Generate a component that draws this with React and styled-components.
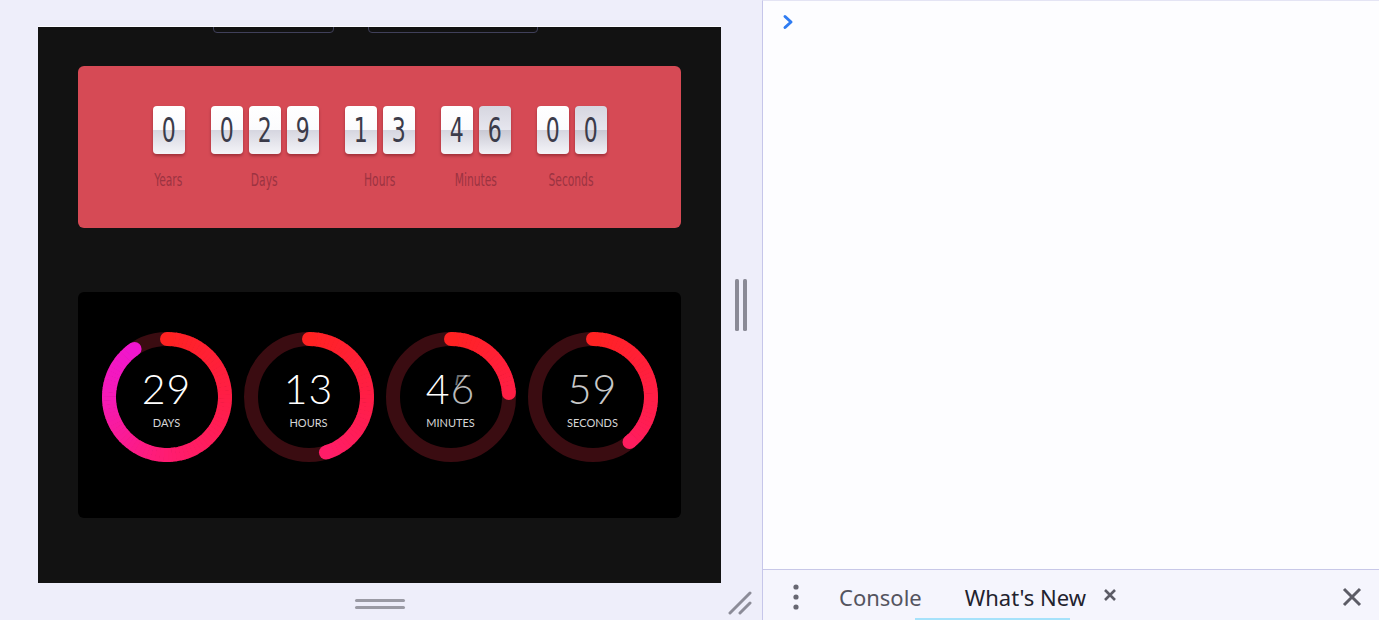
import React from 'react';
import styled, { createGlobalStyle } from 'styled-components';

const GlobalStyle = createGlobalStyle`
  html, body {
    margin: 0;
    padding: 0;
    overflow: hidden;
  }
  body {
    font-family: 'Noto Sans', 'Open Sans', sans-serif;
  }
`;

const Page = styled.div`
  display: flex;
  width: 1379px;
  height: 620px;
`;

// left side: the device preview
const LeftPane = styled.div`
  width: 762px;
  flex: none;
  background: #eeeefa;
  display: grid;
  grid-template-columns: 38px 683px 41px;
  grid-template-rows: 26px 557px 37px;
`;

const Frame = styled.div`
  grid-column: 2;
  grid-row: 2;
  background: #121212;
  border-top: 1px solid #fbfbff;
  overflow: hidden;
  display: flex;
  flex-direction: column;
`;

const TopButtons = styled.div`
  display: flex;
  gap: 34px;
  margin: -32px 0 0 175px;
  height: 38px;
`;

const GhostButton = styled.div`
  width: ${(p) => p.w}px;
  height: 38px;
  box-sizing: border-box;
  border: 1px solid #40405a;
  border-radius: 4px;
`;

const FlipPanel = styled.div`
  margin: 33px 40px 0;
  height: 162px;
  box-sizing: border-box;
  padding-top: 40px;
  background: #d64a55;
  border-radius: 6px;
  display: flex;
  justify-content: center;
  gap: 26px;
`;

const FlipGroup = styled.div`
  display: flex;
  flex-direction: column;
  align-items: center;
`;

const Cards = styled.div`
  display: flex;
  gap: 6px;
`;

const Card = styled.div`
  width: 32px;
  height: 48px;
  border-radius: 4px;
  display: flex;
  align-items: center;
  justify-content: center;
  background: ${(p) =>
    p.flipping
      ? 'linear-gradient(#d6d6e0 0, #e6e6ee 49%, #b9b9c6 50%, #c9c9d4 51%, #f1f1f6 100%)'
      : 'linear-gradient(#ffffff 0, #fbfbfd 49%, #c4c4d0 50%, #d6d6e0 51%, #f4f4f8 100%)'};
  box-shadow: 0 2px 3px rgba(60, 0, 10, 0.35);
`;

const Digit = styled.span`
  display: inline-block;
  font-family: 'DejaVu Sans Condensed', 'DejaVu Sans', sans-serif;
  font-stretch: condensed;
  font-size: 34px;
  line-height: 1;
  color: #3b3b4a;
  transform: scaleX(0.72);
`;

// zero-width slot so the (scaled) label never widens its group
const LabelSlot = styled.div`
  width: 0;
  margin-top: 16px;
  display: flex;
  justify-content: center;
`;

const FlipLabel = styled.span`
  display: inline-block;
  font-family: 'DejaVu Sans Condensed', 'DejaVu Sans', sans-serif;
  font-stretch: condensed;
  font-size: 18px;
  line-height: 20px;
  color: #9b3341;
  transform: scaleX(0.66);
  white-space: nowrap;
`;

const RingPanel = styled.div`
  margin: 64px 40px 0;
  height: 226px;
  box-sizing: border-box;
  padding-top: 40px;
  background: #000;
  border-radius: 6px;
  display: flex;
  justify-content: center;
  gap: 12px;
`;

const RingBox = styled.div`
  width: 130px;
  height: 130px;
  display: grid;
  > * {
    grid-area: 1 / 1;
  }
`;

const RingText = styled.div`
  display: flex;
  flex-direction: column;
  align-items: center;
  justify-content: center;
  padding-top: 2px;
`;

const RingNumber = styled.div`
  font-family: Lato, 'Noto Sans', sans-serif;
  font-weight: 300;
  font-size: 41px;
  line-height: 42px;
  letter-spacing: 1px;
  color: ${(p) => p.color || '#fff'};
  display: flex;
`;

const Ghosted = styled.span`
  display: inline-grid;
  color: #b9b9b9;
  > span {
    grid-area: 1 / 1;
  }
  > span:last-child {
    color: rgba(255, 255, 255, 0.45);
    clip-path: inset(0 0 58% 0);
  }
`;

const RingLabel = styled.div`
  margin-top: 6px;
  font-family: Lato, 'Noto Sans', sans-serif;
  font-size: 11px;
  line-height: 13px;
  color: #d6d6d6;
  text-transform: uppercase;
`;

const BottomBar = styled.div`
  grid-column: 2;
  grid-row: 3;
  display: flex;
  justify-content: center;
  padding-top: 16px;
`;

const Splitter = styled.div`
  grid-column: 3;
  grid-row: 2;
  display: flex;
  align-items: center;
  padding-left: 14px;
`;

const Corner = styled.div`
  grid-column: 3;
  grid-row: 3;
  padding: 8px 0 0 6px;
`;

// right side: devtools
const RightPane = styled.div`
  flex: 1;
  display: flex;
  flex-direction: column;
  border-left: 1px solid #c6c6ea;
  border-top: 1px solid #e4e4f4;
  background: #fdfdff;
`;

const ConsoleArea = styled.div`
  flex: 1;
  padding: 12px 0 0 19px;
`;

const Toolbar = styled.div`
  height: 51px;
  border-top: 1px solid #c8c8e8;
  background: #f5f5fd;
  display: flex;
  align-items: center;
  padding: 3px 0 0 29px;
  box-sizing: border-box;
`;

const TabText = styled.span`
  font-family: 'Noto Sans', 'Open Sans', sans-serif;
  font-size: 22px;
  line-height: 30px;
  color: ${(p) => (p.active ? '#22222e' : '#54545f')};
  margin-left: ${(p) => p.ml}px;
  position: relative;
  white-space: nowrap;
  ${(p) =>
    p.active &&
    `
    &::after {
      content: '';
      position: absolute;
      left: -50px;
      width: 155px;
      bottom: -8px;
      height: 2px;
      background: #a6e2fb;
    }
  `}
`;

const TabClose = styled.span`
  display: flex;
  margin: -4px 0 0 ${(p) => p.ml}px;
`;

const CloseRight = styled.div`
  margin-left: auto;
  margin-right: 17px;
  display: flex;
`;

const arcPoint = (cx, cy, r, deg) => {
  const a = (deg * Math.PI) / 180;
  return [cx + r * Math.sin(a), cy - r * Math.cos(a)];
};

const stops = [
  [0, [255, 34, 34]],
  [90, [255, 30, 70]],
  [180, [255, 28, 112]],
  [270, [245, 26, 182]],
  [330, [240, 22, 208]],
  [360, [240, 22, 215]],
];

const colorAt = (deg) => {
  for (let i = 0; i < stops.length - 1; i++) {
    const [a0, c0] = stops[i];
    const [a1, c1] = stops[i + 1];
    if (deg <= a1) {
      const t = (deg - a0) / (a1 - a0);
      const c = c0.map((v, k) => Math.round(v + (c1[k] - v) * t));
      return `rgb(${c[0]},${c[1]},${c[2]})`;
    }
  }
  return 'rgb(240,22,215)';
};

const Ring = ({ angle }) => {
  const cx = 65;
  const cy = 65;
  const r = 58;
  const segs = [];
  const n = Math.ceil(angle / 4);
  for (let i = 0; i < n; i++) {
    const a0 = (angle * i) / n;
    const a1 = Math.min(angle, (angle * (i + 1)) / n + 0.6);
    const [x0, y0] = arcPoint(cx, cy, r, a0);
    const [x1, y1] = arcPoint(cx, cy, r, a1);
    segs.push(
      <path
        key={i}
        d={`M${x0} ${y0} A${r} ${r} 0 0 1 ${x1} ${y1}`}
        stroke={colorAt((a0 + a1) / 2)}
        strokeWidth='14'
        fill='none'
      />
    );
  }
  const [ex, ey] = arcPoint(cx, cy, r, angle);
  return (
    <svg width='130' height='130' viewBox='0 0 130 130'>
      <circle cx={cx} cy={cy} r={r} stroke='#3a0c11' strokeWidth='14' fill='none' />
      {segs}
      <circle cx={cx} cy={cy - r} r='7' fill={colorAt(0)} />
      <circle cx={ex} cy={ey} r='7' fill={colorAt(angle)} />
    </svg>
  );
};

const flipGroups = [
  { label: 'Years', digits: ['0'] },
  { label: 'Days', digits: ['0', '2', '9'] },
  { label: 'Hours', digits: ['1', '3'] },
  { label: 'Minutes', digits: ['4', '6'], flip: [1] },
  { label: 'Seconds', digits: ['0', '0'], flip: [1] },
];

const rings = [
  { label: 'Days', value: '29', angle: 326 },
  { label: 'Hours', value: '13', angle: 163 },
  { label: 'Minutes', value: '46', angle: 86, ghost: true },
  { label: 'Seconds', value: '59', angle: 141, color: '#c9c9c9' },
];

const App = () => {
  return (
    <Page>
      <GlobalStyle />
      <LeftPane>
        <Frame>
          <TopButtons>
            <GhostButton w={121} />
            <GhostButton w={170} />
          </TopButtons>
          <FlipPanel>
            {flipGroups.map((g) => (
              <FlipGroup key={g.label}>
                <Cards>
                  {g.digits.map((d, i) => (
                    <Card key={i} flipping={g.flip && g.flip.includes(i)}>
                      <Digit>{d}</Digit>
                    </Card>
                  ))}
                </Cards>
                <LabelSlot>
                  <FlipLabel>{g.label}</FlipLabel>
                </LabelSlot>
              </FlipGroup>
            ))}
          </FlipPanel>
          <RingPanel>
            {rings.map((r) => (
              <RingBox key={r.label}>
                <Ring angle={r.angle} />
                <RingText>
                  <RingNumber color={r.color}>
                    {r.ghost ? (
                      <>
                        <span>4</span>
                        <Ghosted>
                          <span>6</span>
                          <span>5</span>
                        </Ghosted>
                      </>
                    ) : (
                      r.value
                    )}
                  </RingNumber>
                  <RingLabel>{r.label}</RingLabel>
                </RingText>
              </RingBox>
            ))}
          </RingPanel>
        </Frame>
        <Splitter>
          <svg width='12' height='52' viewBox='0 0 12 52'>
            <rect x='0' y='0' width='4' height='52' rx='1.5' fill='#8a8a96' />
            <rect x='8' y='0' width='4' height='52' rx='1.5' fill='#8a8a96' />
          </svg>
        </Splitter>
        <BottomBar>
          <svg width='52' height='12' viewBox='0 0 52 12'>
            <rect x='1' y='0' width='50' height='3' rx='1.5' fill='#9a9aa4' />
            <rect x='1' y='7' width='50' height='3' rx='1.5' fill='#9a9aa4' />
          </svg>
        </BottomBar>
        <Corner>
          <svg width='26' height='24' viewBox='0 0 26 24'>
            <path d='M3 22 L23 2 M13 22 L23 12' stroke='#8c8c98' strokeWidth='3' strokeLinecap='round' />
          </svg>
        </Corner>
      </LeftPane>
      <RightPane>
        <ConsoleArea>
          <svg width='12' height='16' viewBox='0 0 12 16'>
            <path d='M3 2.5 L9 8 L3 13.5' stroke='#2f7cf2' strokeWidth='3' fill='none' strokeLinecap='round' strokeLinejoin='round' />
          </svg>
        </ConsoleArea>
        <Toolbar>
          <svg width='8' height='26' viewBox='0 0 8 26'>
            <circle cx='4' cy='3' r='2.6' fill='#676772' />
            <circle cx='4' cy='13' r='2.6' fill='#676772' />
            <circle cx='4' cy='23' r='2.6' fill='#676772' />
          </svg>
          <TabText ml={39}>Console</TabText>
          <TabText ml={43} active>
            What's New
          </TabText>
          <TabClose ml={17}>
            <svg width='14' height='14' viewBox='0 0 14 14'>
              <path d='M2 2 L12 12 M12 2 L2 12' stroke='#5c5c66' strokeWidth='2.6' />
            </svg>
          </TabClose>
          <CloseRight>
            <svg width='20' height='20' viewBox='0 0 20 20'>
              <path d='M2 2 L18 18 M18 2 L2 18' stroke='#5c5c66' strokeWidth='3' />
            </svg>
          </CloseRight>
        </Toolbar>
      </RightPane>
    </Page>
  );
};

export default App;
